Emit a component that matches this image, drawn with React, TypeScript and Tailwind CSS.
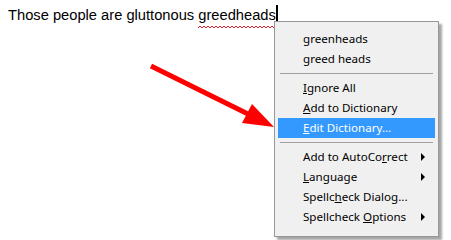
import React from "react";

const Item = ({ children, sub = false, hl = false }: { children: React.ReactNode; sub?: boolean; hl?: boolean }) => (
  <div className={`flex items-center h-[20px] pl-[25px] pr-[8px] mx-[3px] ${hl ? "bg-[#3399ff] text-white" : "text-black"}`}>
    <span className="flex-1">{children}</span>
    {sub && (
      <svg width="5" height="8" viewBox="0 0 5 8" className="mr-[1px]">
        <path d="M0 0 L4 4 L0 8 Z" fill="#000" />
      </svg>
    )}
  </div>
);

const Sep = () => <div className="h-px bg-[#a0a0a0] mx-[5px] my-[4px]" />;

export default function App() {
  return (
    <div className="relative w-[451px] h-[240px] bg-white overflow-hidden">
      <div className="pl-[8px] pt-[4px] text-[14.7px] text-black leading-[22px]" style={{ fontFamily: '"Liberation Sans", Arial, sans-serif' }}>
        Those people are gluttonous{" "}
        <span className="relative">
          greedheads
          <svg className="absolute left-0 top-[18px]" width="76" height="4" viewBox="0 0 76 4">
            <path d="M0 3 L2 1 L4 3 L6 1 L8 3 L10 1 L12 3 L14 1 L16 3 L18 1 L20 3 L22 1 L24 3 L26 1 L28 3 L30 1 L32 3 L34 1 L36 3 L38 1 L40 3 L42 1 L44 3 L46 1 L48 3 L50 1 L52 3 L54 1 L56 3 L58 1 L60 3 L62 1 L64 3 L66 1 L68 3 L70 1 L72 3 L74 1 L76 3" stroke="#e0202a" strokeWidth="1" fill="none" />
          </svg>
        </span>
        <span className="inline-block w-[2px] h-[19px] bg-black align-[-4px]" />
      </div>

      <svg className="absolute left-0 top-0" width="451" height="240">
        <line x1="151" y1="66" x2="252" y2="116" stroke="#ff0000" strokeWidth="5" />
        <polygon points="274,127 252,104 242,123" fill="#ff0000" />
      </svg>

      <div className="absolute left-[274px] top-[21px] w-[165px] h-[216px] bg-[#f0f0f0] border border-[#979797] shadow-[3px_3px_2px_rgba(0,0,0,0.35)] py-[7px] text-[11.6px]" style={{ fontFamily: '"Noto Sans", "Segoe UI", sans-serif' }}>
        <Item>greenheads</Item>
        <Item>greed heads</Item>
        <Sep />
        <Item><u>I</u>gnore All</Item>
        <Item><u>A</u>dd to Dictionary</Item>
        <Item hl><u>E</u>dit Dictionary...</Item>
        <Sep />
        <Item sub>Add to AutoCo<u>r</u>rect</Item>
        <Item sub><u>L</u>anguage</Item>
        <Item>Spellc<u>h</u>eck Dialog...</Item>
        <Item sub>Spellcheck <u>O</u>ptions</Item>
      </div>
    </div>
  );
}
